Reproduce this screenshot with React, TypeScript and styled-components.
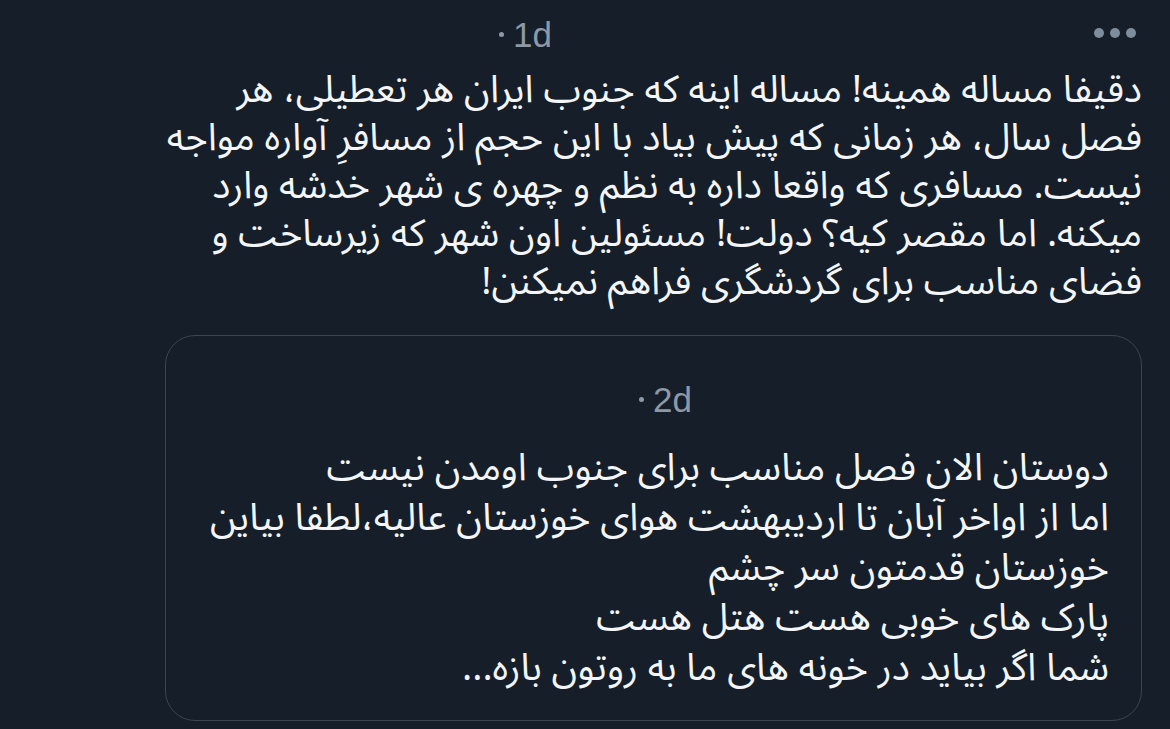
import React from "react";
import styled, { createGlobalStyle } from "styled-components";

const Global = createGlobalStyle`
  html, body { margin: 0; padding: 0; background: #161e29; }
  #root { width: 1170px; height: 729px; overflow: hidden; }
`;

const Page = styled.div`
  width: 1170px;
  height: 729px;
  background: #161e29;
  box-sizing: border-box;
  padding: 0 28px 0 165px;
  overflow: hidden;
`;

const Header = styled.div`
  display: flex;
  align-items: center;
  height: 66px;
  padding: 3px 6px 0 0;
  box-sizing: border-box;
`;

const Spacer = styled.div<{ $w: number }>`
  width: ${(p) => p.$w}px;
  flex: none;
`;

const Meta = styled.div<{ $size: number }>`
  display: flex;
  align-items: center;
  gap: 9px;
  font-family: "Liberation Sans", Arial, sans-serif;
  font-size: ${(p) => p.$size}px;
  color: #8d99a6;
  line-height: 1;
`;

const Dot = styled.span`
  width: 5px;
  height: 5px;
  border-radius: 50%;
  background: #8d99a6;
  display: inline-block;
`;

const More = styled.div`
  margin-left: auto;
  margin-bottom: 4px;
  display: flex;
  gap: 6px;
  align-items: center;
`;

const MoreDot = styled.span`
  width: 10px;
  height: 10px;
  border-radius: 50%;
  background: #7f8c9c;
`;

const Body = styled.div<{ $size: number; $lh: number }>`
  direction: rtl;
  text-align: right;
  color: #f3f5f7;
  font-family: "Noto Sans Arabic", "Vazirmatn", "DejaVu Sans", sans-serif;
  font-size: ${(p) => p.$size}px;
  line-height: ${(p) => p.$lh}px;
  white-space: nowrap;
`;

const Line = styled.div``;

const Quote = styled.div`
  margin-top: 29px;
  width: 977px;
  height: 386px;
  box-sizing: border-box;
  border: 1.5px solid #3a4551;
  border-radius: 30px;
  padding: 0 32px 0 0;
`;

const QuoteHeader = styled.div`
  display: flex;
  align-items: center;
  padding: 46px 0 26px;
`;

const main = [
  "دقیفا مساله همینه! مساله اینه که جنوب ایران هر تعطیلی، هر",
  "فصل سال، هر زمانی که پیش بیاد با این حجم از مسافرِ آواره مواجه",
  "نیست. مسافری که واقعا داره به نظم و چهره ی شهر خدشه وارد",
  "میکنه. اما مقصر کیه؟ دولت! مسئولین اون شهر که زیرساخت و",
  "فضای مناسب برای گردشگری فراهم نمیکنن!",
];

const quoted = [
  "دوستان الان فصل مناسب برای جنوب اومدن نیست",
  "اما از اواخر آبان تا اردیبهشت هوای خوزستان عالیه،لطفا بیاین",
  "خوزستان قدمتون سر چشم",
  "پارک های خوبی هست هتل هست",
  "شما اگر بیاید در خونه های ما به روتون بازه...",
];

export default function App() {
  return (
    <>
      <Global />
      <Page>
        <Header>
          <Spacer $w={334} />
          <Meta $size={35}>
            <Dot />
            <span>1d</span>
          </Meta>
          <More>
            <MoreDot />
            <MoreDot />
            <MoreDot />
          </More>
        </Header>
        <Body $size={38} $lh={48}>
          {main.map((l, i) => (
            <Line key={i}>{l}</Line>
          ))}
        </Body>
        <Quote>
          <QuoteHeader>
            <Spacer $w={473} />
            <Meta $size={35}>
              <Dot />
              <span>2d</span>
            </Meta>
          </QuoteHeader>
          <Body $size={38} $lh={50}>
            {quoted.map((l, i) => (
              <Line key={i}>{l}</Line>
            ))}
          </Body>
        </Quote>
      </Page>
    </>
  );
}
